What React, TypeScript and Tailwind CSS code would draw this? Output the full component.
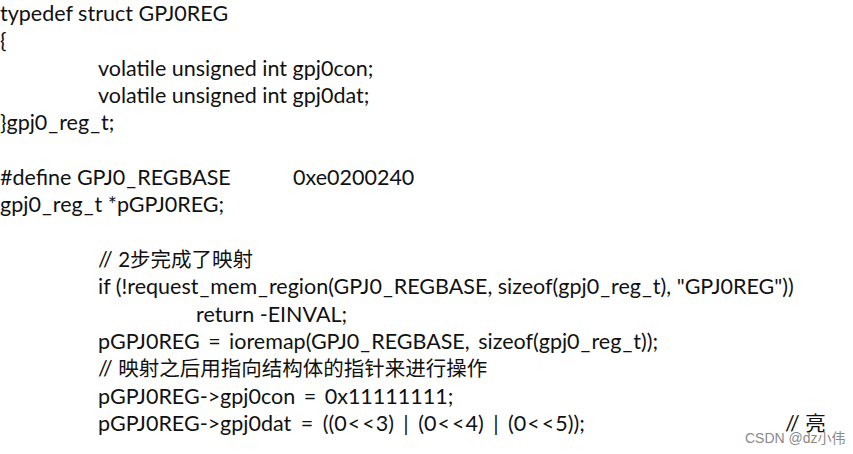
import React from "react";

const font = { fontFamily: 'Lato, "Noto Sans CJK SC", sans-serif' };

function T({ s }: { s: string }) {
  const parts = s.split("_");
  return (
    <>
      {parts.map((p, i) => (
        <React.Fragment key={i}>
          {p}
          {i < parts.length - 1 && <span className="mx-[1px]">_</span>}
        </React.Fragment>
      ))}
    </>
  );
}

function Line({ indent = 0, s, wide = false }: { indent?: number; s?: string; wide?: boolean }) {
  const pl = indent === 0 ? "pl-0" : indent === 1 ? "pl-[98px]" : "pl-[196px]";
  return (
    <div className={`h-[27.33px] leading-[27.33px] whitespace-pre ${pl} ${wide ? "[word-spacing:3px]" : ""}`}>
      {s ? <T s={s} /> : null}
    </div>
  );
}

function Comment({ text }: { text: string }) {
  return (
    <div className="h-[27.33px] leading-[27.33px] whitespace-pre pl-[98px]">
      // <span className="text-[20.5px]">{text}</span>
    </div>
  );
}

const LT = () => <span className="mx-[1px]">&lt;</span>;

export default function App() {
  return (
    <div className="relative w-[853px] h-[454px] bg-white text-[#111] overflow-hidden text-[21.5px]" style={font}>
      <div className="flex flex-col">
        <Line s="typedef struct GPJ0REG" />
        <Line s="{" />
        <Line indent={1} s="volatile unsigned int gpj0con;" />
        <Line indent={1} s="volatile unsigned int gpj0dat;" />
        <Line s="}gpj0_reg_t;" />
        <Line />
        <div className="flex h-[27.33px] leading-[27.33px] whitespace-pre">
          <span className="w-[293px] shrink-0">
            <T s="#define GPJ0_REGBASE" />
          </span>
          <span>0xe0200240</span>
        </div>
        <Line s="gpj0_reg_t *pGPJ0REG;" />
        <Line />
        <Comment text="2步完成了映射" />
        <Line indent={1} s={'if (!request_mem_region(GPJ0_REGBASE, sizeof(gpj0_reg_t), "GPJ0REG"))'} />
        <Line indent={2} s="return -EINVAL;" />
        <Line indent={1} wide s="pGPJ0REG = ioremap(GPJ0_REGBASE, sizeof(gpj0_reg_t));" />
        <Comment text="映射之后用指向结构体的指针来进行操作" />
        <Line indent={1} wide s="pGPJ0REG->gpj0con = 0x11111111;" />
        <div className="flex h-[27.33px] leading-[27.33px] whitespace-pre">
          <span className="w-[785px] shrink-0 pl-[98px] [word-spacing:4px]">
            pGPJ0REG-&gt;gpj0dat = ((0<LT /><LT />3) | (0<LT /><LT />4) | (0<LT /><LT />5));
          </span>
          <span>
            // <span className="text-[20.5px]">亮</span>
          </span>
        </div>
      </div>
      <div
        className="absolute left-[745px] top-[429px] text-[14px] leading-[18px] text-[#8a8a8a] whitespace-pre"
        style={{ fontFamily: '"Liberation Sans", "Noto Sans CJK SC", sans-serif' }}
      >
        CSDN @dz小伟
      </div>
    </div>
  );
}
